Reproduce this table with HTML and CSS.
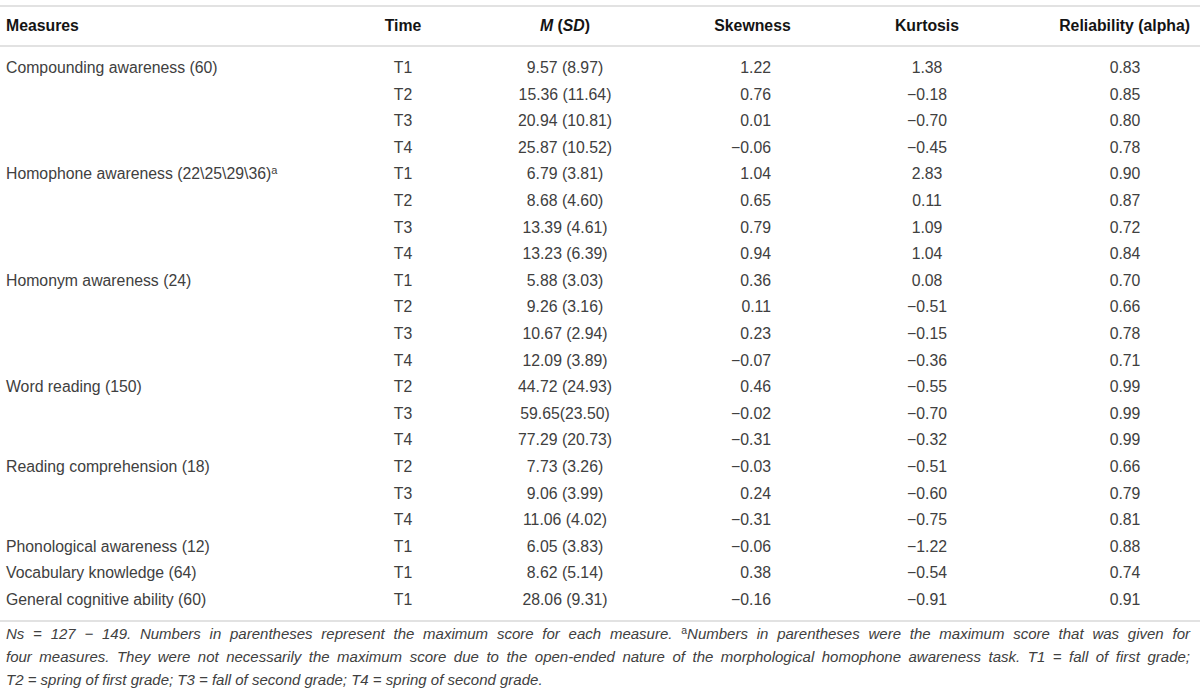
FILE: index.html
```html
<!DOCTYPE html>
<html>
<head lang="en">
    <meta charset="UTF-8">
    <title>Descriptive statistics</title>
    <link rel="stylesheet" href="styles.css">
</head>
<body>
<div id="table-wrap">
    <table class="stats">
        <colgroup>
            <col class="col-measure">
            <col class="col-time">
            <col class="col-msd">
            <col class="col-skew">
            <col class="col-kurt">
            <col class="col-rel">
        </colgroup>
        <thead>
        <tr>
            <th class="measure">Measures</th>
            <th>Time</th>
            <th><i>M</i> (<i>SD</i>)</th>
            <th>Skewness</th>
            <th>Kurtosis</th>
            <th class="rel">Reliability (alpha)</th>
        </tr>
        </thead>
        <tbody>
        <tr class="first">
            <td class="measure">Compounding awareness (60)</td>
            <td>T1</td><td>9.57 (8.97)</td><td class="skew">1.22</td><td>1.38</td><td class="rel">0.83</td>
        </tr>
        <tr>
            <td class="measure"></td>
            <td>T2</td><td>15.36 (11.64)</td><td class="skew">0.76</td><td>&minus;0.18</td><td class="rel">0.85</td>
        </tr>
        <tr>
            <td class="measure"></td>
            <td>T3</td><td>20.94 (10.81)</td><td class="skew">0.01</td><td>&minus;0.70</td><td class="rel">0.80</td>
        </tr>
        <tr>
            <td class="measure"></td>
            <td>T4</td><td>25.87 (10.52)</td><td class="skew">&minus;0.06</td><td>&minus;0.45</td><td class="rel">0.78</td>
        </tr>
        <tr>
            <td class="measure">Homophone awareness (22\25\29\36)<sup>a</sup></td>
            <td>T1</td><td>6.79 (3.81)</td><td class="skew">1.04</td><td>2.83</td><td class="rel">0.90</td>
        </tr>
        <tr>
            <td class="measure"></td>
            <td>T2</td><td>8.68 (4.60)</td><td class="skew">0.65</td><td>0.11</td><td class="rel">0.87</td>
        </tr>
        <tr>
            <td class="measure"></td>
            <td>T3</td><td>13.39 (4.61)</td><td class="skew">0.79</td><td>1.09</td><td class="rel">0.72</td>
        </tr>
        <tr>
            <td class="measure"></td>
            <td>T4</td><td>13.23 (6.39)</td><td class="skew">0.94</td><td>1.04</td><td class="rel">0.84</td>
        </tr>
        <tr>
            <td class="measure">Homonym awareness (24)</td>
            <td>T1</td><td>5.88 (3.03)</td><td class="skew">0.36</td><td>0.08</td><td class="rel">0.70</td>
        </tr>
        <tr>
            <td class="measure"></td>
            <td>T2</td><td>9.26 (3.16)</td><td class="skew">0.11</td><td>&minus;0.51</td><td class="rel">0.66</td>
        </tr>
        <tr>
            <td class="measure"></td>
            <td>T3</td><td>10.67 (2.94)</td><td class="skew">0.23</td><td>&minus;0.15</td><td class="rel">0.78</td>
        </tr>
        <tr>
            <td class="measure"></td>
            <td>T4</td><td>12.09 (3.89)</td><td class="skew">&minus;0.07</td><td>&minus;0.36</td><td class="rel">0.71</td>
        </tr>
        <tr>
            <td class="measure">Word reading (150)</td>
            <td>T2</td><td>44.72 (24.93)</td><td class="skew">0.46</td><td>&minus;0.55</td><td class="rel">0.99</td>
        </tr>
        <tr>
            <td class="measure"></td>
            <td>T3</td><td>59.65(23.50)</td><td class="skew">&minus;0.02</td><td>&minus;0.70</td><td class="rel">0.99</td>
        </tr>
        <tr>
            <td class="measure"></td>
            <td>T4</td><td>77.29 (20.73)</td><td class="skew">&minus;0.31</td><td>&minus;0.32</td><td class="rel">0.99</td>
        </tr>
        <tr>
            <td class="measure">Reading comprehension (18)</td>
            <td>T2</td><td>7.73 (3.26)</td><td class="skew">&minus;0.03</td><td>&minus;0.51</td><td class="rel">0.66</td>
        </tr>
        <tr>
            <td class="measure"></td>
            <td>T3</td><td>9.06 (3.99)</td><td class="skew">0.24</td><td>&minus;0.60</td><td class="rel">0.79</td>
        </tr>
        <tr>
            <td class="measure"></td>
            <td>T4</td><td>11.06 (4.02)</td><td class="skew">&minus;0.31</td><td>&minus;0.75</td><td class="rel">0.81</td>
        </tr>
        <tr>
            <td class="measure">Phonological awareness (12)</td>
            <td>T1</td><td>6.05 (3.83)</td><td class="skew">&minus;0.06</td><td>&minus;1.22</td><td class="rel">0.88</td>
        </tr>
        <tr>
            <td class="measure">Vocabulary knowledge (64)</td>
            <td>T1</td><td>8.62 (5.14)</td><td class="skew">0.38</td><td>&minus;0.54</td><td class="rel">0.74</td>
        </tr>
        <tr class="last">
            <td class="measure">General cognitive ability (60)</td>
            <td>T1</td><td>28.06 (9.31)</td><td class="skew">&minus;0.16</td><td>&minus;0.91</td><td class="rel">0.91</td>
        </tr>
        </tbody>
    </table>
    <p class="note">
        <span class="line full"><i>Ns</i> = 127 &minus; 149. Numbers in parentheses represent the maximum score for each measure. <sup>a</sup>Numbers in parentheses were the maximum score that was given for</span>
        <span class="line full">four measures. They were not necessarily the maximum score due to the open-ended nature of the morphological homophone awareness task. T1 = fall of first grade;</span>
        <span class="line">T2 = spring of first grade; T3 = fall of second grade; T4 = spring of second grade.</span>
    </p>
</div>
</body>
</html>
```

FILE: styles.css
```css
body, html {
    margin: 0;
    background: #fff;
}

#table-wrap {
    width: 1200px;
    padding-top: 5px;
    font-family: "Liberation Sans", Arial, sans-serif;
    color: #404040;
}

/* Table */
.stats {
    width: 1200px;
    table-layout: fixed;
    border-collapse: collapse;
    font-size: 15.8px;
}

.col-measure { width: 370px; }
.col-time    { width: 66px; }
.col-msd     { width: 258px; }
.col-skew    { width: 117px; }
.col-kurt    { width: 232px; }
.col-rel     { width: 157px; }

.stats thead tr {
    border-top: 2px solid #e2e2e2;
    border-bottom: 2px solid #e2e2e2;
}

.stats th {
    height: 38px;
    padding: 0;
    font-weight: bold;
    color: #141414;
    text-align: center;
    white-space: nowrap;
}

.stats td {
    padding: 0;
    line-height: 26.6px;
    text-align: center;
    white-space: nowrap;
}

.stats .measure {
    text-align: left;
    padding-left: 6px;
}

.stats td.skew {
    text-align: right;
    padding-right: 40px;
}

.stats .rel {
    padding-left: 7px;
}

.stats th.rel {
    text-align: right;
    padding-right: 10px;
}

.stats tr.first td {
    padding-top: 8px;
}

.stats tr.last td {
    padding-bottom: 7px;
}

.stats tbody tr.last {
    border-bottom: 2px solid #e2e2e2;
}

.stats sup, .note sup {
    font-size: 0.7em;
    font-style: normal;
    vertical-align: 0.45em;
    line-height: 1;
}

/* Footnote */
.note {
    margin: 0;
    padding: 0 10px 0 6px;
    font-size: 15px;
    line-height: 23px;
    font-style: italic;
}

.note .line {
    display: block;
    white-space: nowrap;
}

.note .line.full {
    text-align: justify;
    text-align-last: justify;
}
```
